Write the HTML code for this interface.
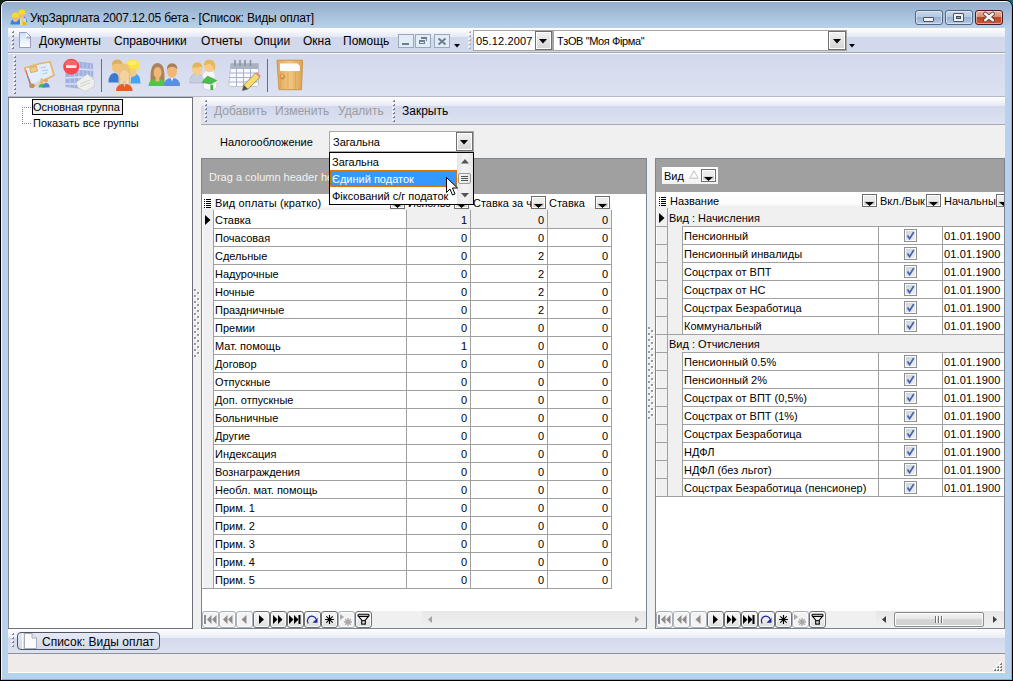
<!DOCTYPE html>
<html><head><meta charset="utf-8">
<style>
*{box-sizing:border-box;margin:0;padding:0}
html,body{width:1013px;height:681px;overflow:hidden}
body{position:relative;background:#0f2a1c;font-family:"Liberation Sans",sans-serif;font-size:11px;color:#000}
.a{position:absolute}
svg.a{overflow:visible}
.t{position:absolute;white-space:nowrap;line-height:1}
.r{text-align:right}
</style></head><body>
<div class="a" style="left:0px;top:0px;width:1013px;height:681px;background:#0f2a1c"></div>
<div class="a" style="left:990px;top:0px;width:23px;height:12px;background:#1b6a74"></div>
<div class="a" style="left:0px;top:0px;width:1013px;height:681px;background:#000;border-radius:7px 7px 0 0"></div>
<div class="a" style="left:1px;top:1px;width:1011px;height:679px;background:#b9d1ea;border-radius:6px 6px 0 0;border-top:1px solid #f6f9fc;border-left:1px solid #f4f8fc;border-right:1px solid #3fd4f4;border-bottom:1px solid #2cd2f0"></div>
<div class="a" style="left:2px;top:2px;width:1009px;height:26px;background:linear-gradient(#93adcb,#b9d1ea);border-radius:5px 5px 0 0"></div>
<svg class="a" style="left:11px;top:9px;" width="16" height="16" viewBox="0 0 16 16">
<path d="M8 13 q0-5.5 4-5.5 q4 0 4 5.5z" fill="#2e8ae6"/>
<ellipse cx="10.8" cy="6.8" rx="2.6" ry="3" fill="#f2b877"/>
<path d="M7.3 5.2 q0-4.6 3.7-4.6 q3.7 0 3.7 4.6z" fill="#f8dc20"/>
<path d="M-0.5 15.6 q0-5.8 4.8-5.8 q4.8 0 4.8 5.8z" fill="#2a86e2"/>
<ellipse cx="4.4" cy="10" rx="2.6" ry="3" fill="#f2b877"/>
<path d="M0.8 8.2 q0-4.6 3.7-4.6 q3.7 0 3.7 4.6z" fill="#f8dc20"/>
<rect x="9" y="9.2" width="6" height="6.8" fill="#ecdcaa"/>
<path d="M10 11 h4 M10 13 h3" stroke="#c8b070" stroke-width="0.6"/>
<rect x="11.5" y="13" width="3.8" height="3" fill="#f2b800"/>
</svg>
<div class="t" style="left:30px;top:12px;font-size:12px;color:#000;letter-spacing:-0.18px">УкрЗарплата 2007.12.05 бета - [Список: Виды оплат]</div>
<div class="a" style="left:915px;top:10px;width:28px;height:15px;background:linear-gradient(#c5d7ec 0,#b4c9e3 45%,#98b2d4 50%,#b3cae6 100%);border:1px solid #53657f;border-radius:3px;box-shadow:inset 0 0 0 1px rgba(255,255,255,0.45)"></div>
<div class="a" style="left:945px;top:10px;width:28px;height:15px;background:linear-gradient(#c5d7ec 0,#b4c9e3 45%,#98b2d4 50%,#b3cae6 100%);border:1px solid #53657f;border-radius:3px;box-shadow:inset 0 0 0 1px rgba(255,255,255,0.45)"></div>
<div class="a" style="left:975px;top:10px;width:28px;height:15px;background:linear-gradient(#eab0a2 0,#de8c78 45%,#c04424 50%,#c85a3a 100%);border:1px solid #4a1a1e;border-radius:3px;box-shadow:inset 0 0 0 1px rgba(255,255,255,0.45)"></div>
<div class="a" style="left:923px;top:17px;width:11px;height:5px;background:#f0f0f0;border:1px solid #4a5464;border-radius:1px"></div>
<div class="a" style="left:953px;top:13px;width:11px;height:9px;background:#f0f0f0;border:1px solid #4a5464;border-radius:1px"></div>
<div class="a" style="left:956px;top:16px;width:5px;height:3px;background:#8ea5c4;border:1px solid #3a4a5e"></div>
<svg class="a" style="left:983px;top:12px;" width="12" height="10" viewBox="0 0 12 10"><path d="M2.2 1.8 L9.8 8.2 M9.8 1.8 L2.2 8.2" stroke="#5a3a38" stroke-width="4.2" stroke-linecap="round"/><path d="M2.2 1.8 L9.8 8.2 M9.8 1.8 L2.2 8.2" stroke="#f2f2f2" stroke-width="2.6" stroke-linecap="round"/></svg>
<div class="a" style="left:8px;top:28px;width:997px;height:24px;background:linear-gradient(#ffffff 0,#e4e8f4 9px,#d3d9ed 9px,#d3d9ed 100%)"></div>
<div class="a" style="left:8px;top:52px;width:997px;height:1px;background:#a0a3ad"></div>
<div class="a" style="left:8px;top:53px;width:997px;height:1px;background:#fbfcfe"></div>
<div class="a" style="left:12px;top:31px;width:2px;height:2px;background:linear-gradient(135deg,#e8eaf0 0,#e8eaf0 40%,#7e828e 40%);box-shadow:-1px -1px 0 rgba(255,255,255,0.7)"></div>
<div class="a" style="left:12px;top:35px;width:2px;height:2px;background:linear-gradient(135deg,#e8eaf0 0,#e8eaf0 40%,#7e828e 40%);box-shadow:-1px -1px 0 rgba(255,255,255,0.7)"></div>
<div class="a" style="left:12px;top:39px;width:2px;height:2px;background:linear-gradient(135deg,#e8eaf0 0,#e8eaf0 40%,#7e828e 40%);box-shadow:-1px -1px 0 rgba(255,255,255,0.7)"></div>
<div class="a" style="left:12px;top:43px;width:2px;height:2px;background:linear-gradient(135deg,#e8eaf0 0,#e8eaf0 40%,#7e828e 40%);box-shadow:-1px -1px 0 rgba(255,255,255,0.7)"></div>
<div class="a" style="left:12px;top:47px;width:2px;height:2px;background:linear-gradient(135deg,#e8eaf0 0,#e8eaf0 40%,#7e828e 40%);box-shadow:-1px -1px 0 rgba(255,255,255,0.7)"></div>
<svg width="0" height="0" style="position:absolute"><defs><linearGradient id="dg" x1="0" y1="0" x2="0" y2="1"><stop offset="0" stop-color="#c8e0fa"/><stop offset="1" stop-color="#ffffff"/></linearGradient></defs></svg><svg class="a" style="left:19px;top:32px;" width="12" height="16" viewBox="0 0 12 16"><path d="M0.5 0.5 H7.5 L11.5 4.5 V15.5 H0.5Z" fill="url(#dg)" stroke="#9c9abf"/><path d="M7 1 L11 5 H7Z" fill="#fff"/><path d="M7.5 4.5 H11.5 V6.5 H7.5Z" fill="#8a9aa8" opacity="0.7"/></svg>
<div class="t" style="left:39px;top:35px;font-size:12px;color:#000;">Документы</div>
<div class="t" style="left:114px;top:35px;font-size:12px;color:#000;">Справочники</div>
<div class="t" style="left:201px;top:35px;font-size:12px;color:#000;">Отчеты</div>
<div class="t" style="left:254px;top:35px;font-size:12px;color:#000;">Опции</div>
<div class="t" style="left:303px;top:35px;font-size:12px;color:#000;">Окна</div>
<div class="t" style="left:343px;top:35px;font-size:12px;color:#000;">Помощь</div>
<div class="a" style="left:398px;top:34px;width:16px;height:14px;background:#e2ecf7;border:1px solid #9aa8bc"></div>
<div class="a" style="left:415px;top:34px;width:16px;height:14px;background:#e2ecf7;border:1px solid #9aa8bc"></div>
<div class="a" style="left:434px;top:34px;width:16px;height:14px;background:#e2ecf7;border:1px solid #9aa8bc"></div>
<div class="a" style="left:402px;top:43px;width:7px;height:2px;background:#6e7c8e"></div>
<div class="a" style="left:419px;top:40px;width:6px;height:4px;border:1px solid #6e7c8e;border-top-width:2px"></div>
<div class="a" style="left:421px;top:37px;width:6px;height:4px;border:1px solid #6e7c8e;border-top-width:2px;border-bottom:none;border-left:none"></div>
<svg class="a" style="left:437px;top:37px;" width="10" height="9" viewBox="0 0 10 9"><path d="M1.5 1.5 L8.5 7.5 M8.5 1.5 L1.5 7.5" stroke="#6e7c8e" stroke-width="2"/></svg>
<svg class="a" style="left:454px;top:44px;" width="6" height="4" viewBox="0 0 6 4"><path d="M0 0 H6 L3 3.5Z" fill="#000"/></svg>
<div class="a" style="left:469px;top:31px;width:2px;height:2px;background:linear-gradient(135deg,#e8eaf0 0,#e8eaf0 40%,#a8adba 40%);box-shadow:-1px -1px 0 rgba(255,255,255,0.7)"></div>
<div class="a" style="left:469px;top:35px;width:2px;height:2px;background:linear-gradient(135deg,#e8eaf0 0,#e8eaf0 40%,#a8adba 40%);box-shadow:-1px -1px 0 rgba(255,255,255,0.7)"></div>
<div class="a" style="left:469px;top:39px;width:2px;height:2px;background:linear-gradient(135deg,#e8eaf0 0,#e8eaf0 40%,#a8adba 40%);box-shadow:-1px -1px 0 rgba(255,255,255,0.7)"></div>
<div class="a" style="left:469px;top:43px;width:2px;height:2px;background:linear-gradient(135deg,#e8eaf0 0,#e8eaf0 40%,#a8adba 40%);box-shadow:-1px -1px 0 rgba(255,255,255,0.7)"></div>
<div class="a" style="left:469px;top:47px;width:2px;height:2px;background:linear-gradient(135deg,#e8eaf0 0,#e8eaf0 40%,#a8adba 40%);box-shadow:-1px -1px 0 rgba(255,255,255,0.7)"></div>
<div class="a" style="left:473px;top:30px;width:80px;height:21px;background:#fff;border:1px solid #a6a6a6"></div>
<div class="t" style="left:476px;top:36px;font-size:11px;color:#000;letter-spacing:0.15px">05.12.2007</div>
<div class="a" style="left:535px;top:31px;width:17px;height:19px;background:linear-gradient(#f2f2f2,#d4d4d4);border:1px solid #707070;box-shadow:inset 0 0 0 1px #fff"></div>
<svg class="a" style="left:539px;top:39px;" width="8" height="5" viewBox="0 0 8 5"><path d="M0 0 H8 L4 4.5Z" fill="#000"/></svg>
<div class="a" style="left:553px;top:30px;width:294px;height:21px;background:#fff;border:1px solid #a6a6a6"></div>
<div class="t" style="left:557px;top:36px;font-size:11px;color:#000;letter-spacing:-0.4px">ТзОВ "Моя Фірма"</div>
<div class="a" style="left:828px;top:31px;width:18px;height:19px;background:linear-gradient(#f2f2f2,#d4d4d4);border:1px solid #707070;box-shadow:inset 0 0 0 1px #fff"></div>
<svg class="a" style="left:833px;top:39px;" width="8" height="5" viewBox="0 0 8 5"><path d="M0 0 H8 L4 4.5Z" fill="#000"/></svg>
<svg class="a" style="left:849px;top:44px;" width="6" height="4" viewBox="0 0 6 4"><path d="M0 0 H6 L3 3.5Z" fill="#000"/></svg>
<div class="a" style="left:8px;top:54px;width:997px;height:42px;background:linear-gradient(#d3d9ed,#dde2f1)"></div>
<div class="a" style="left:8px;top:96px;width:997px;height:1px;background:#b5b9c8"></div>
<div class="a" style="left:14px;top:56px;width:2px;height:2px;background:linear-gradient(135deg,#e8eaf0 0,#e8eaf0 40%,#7e828e 40%);box-shadow:-1px -1px 0 rgba(255,255,255,0.7)"></div>
<div class="a" style="left:14px;top:60px;width:2px;height:2px;background:linear-gradient(135deg,#e8eaf0 0,#e8eaf0 40%,#7e828e 40%);box-shadow:-1px -1px 0 rgba(255,255,255,0.7)"></div>
<div class="a" style="left:14px;top:64px;width:2px;height:2px;background:linear-gradient(135deg,#e8eaf0 0,#e8eaf0 40%,#7e828e 40%);box-shadow:-1px -1px 0 rgba(255,255,255,0.7)"></div>
<div class="a" style="left:14px;top:68px;width:2px;height:2px;background:linear-gradient(135deg,#e8eaf0 0,#e8eaf0 40%,#7e828e 40%);box-shadow:-1px -1px 0 rgba(255,255,255,0.7)"></div>
<div class="a" style="left:14px;top:72px;width:2px;height:2px;background:linear-gradient(135deg,#e8eaf0 0,#e8eaf0 40%,#7e828e 40%);box-shadow:-1px -1px 0 rgba(255,255,255,0.7)"></div>
<div class="a" style="left:14px;top:76px;width:2px;height:2px;background:linear-gradient(135deg,#e8eaf0 0,#e8eaf0 40%,#7e828e 40%);box-shadow:-1px -1px 0 rgba(255,255,255,0.7)"></div>
<div class="a" style="left:14px;top:80px;width:2px;height:2px;background:linear-gradient(135deg,#e8eaf0 0,#e8eaf0 40%,#7e828e 40%);box-shadow:-1px -1px 0 rgba(255,255,255,0.7)"></div>
<div class="a" style="left:14px;top:84px;width:2px;height:2px;background:linear-gradient(135deg,#e8eaf0 0,#e8eaf0 40%,#7e828e 40%);box-shadow:-1px -1px 0 rgba(255,255,255,0.7)"></div>
<div class="a" style="left:14px;top:88px;width:2px;height:2px;background:linear-gradient(135deg,#e8eaf0 0,#e8eaf0 40%,#7e828e 40%);box-shadow:-1px -1px 0 rgba(255,255,255,0.7)"></div>
<div class="a" style="left:14px;top:92px;width:2px;height:2px;background:linear-gradient(135deg,#e8eaf0 0,#e8eaf0 40%,#7e828e 40%);box-shadow:-1px -1px 0 rgba(255,255,255,0.7)"></div>
<div class="a" style="left:101px;top:59px;width:1px;height:33px;background:#6a6f7a"></div>
<div class="a" style="left:267px;top:59px;width:1px;height:33px;background:#6a6f7a"></div>
<svg class="a" style="left:24px;top:60px;" width="32" height="30" viewBox="0 0 32 30">
<path d="M0.5 8 L15.5 3.8 L26 1.8 L30 15.3 L18 21.3 L8 27 Z" fill="#e2eefb" stroke="#e8b25e" stroke-width="1.6" stroke-linejoin="round"/>
<path d="M15.5 3.8 L18 21.3" stroke="#d8e4f4" stroke-width="0.8"/>
<path d="M1.8 10 L6 24" stroke="#e06060" stroke-width="1"/><path d="M4 17 L6.5 24" stroke="#5a90e0" stroke-width="1"/>
<rect x="6" y="7" width="7" height="5" fill="#f0cc88" stroke="#d8a458" stroke-width="0.8" transform="rotate(-12 9 9)"/>
<path d="M17 8 q2-1 5 -1 M18 11 q2-1 6-1 M18.5 14 q2-1 5-1" stroke="#98b4e4" stroke-width="0.8" fill="none"/>
<path d="M9 24 L15 20.5 L17 22 L11 26z" fill="#d8dce0"/>
<ellipse cx="8" cy="25.8" rx="2.8" ry="2.3" fill="#c88e58"/>
<rect x="16.5" y="18.5" width="2.6" height="5.5" fill="#e8b670"/>
<path d="M14.5 27.5 q0-3.5 3.3-3.5 q3.3 0 3.3 3.5z" fill="#40c040"/>
<circle cx="22" cy="20.5" r="2" fill="#eaa860"/>
<path d="M18.5 27.5 q0-4.5 3.6-4.5 q3.6 0 3.6 4.5z" fill="#4a84d8"/>
</svg>
<svg class="a" style="left:63px;top:60px;" width="32" height="32" viewBox="0 0 32 32">
<path d="M2.5 7 L16 1.5 L30 3.5 L30.5 27 L16 28.5 L2.5 27 Z" fill="#9fb0e2"/>
<path d="M16 1.5 V28.5" stroke="#c8d2f0" stroke-width="1"/>
<path d="M2.5 11 L16 9 L30 10 M2.5 18 L16 17 L30 17.5 M2.5 24 L16 24 L30 24" stroke="#dde4f6" stroke-width="1.3" fill="none"/>
<path d="M7 8 V27 M11.5 7 V27 M20 3 V28 M24 3.5 V28 M27.5 4 V28" stroke="#c4cef0" stroke-width="0.9"/>
<path d="M13 22.5 L24.5 14 L31.5 20.5 L31 26.5 L22 31.5 L15 27.5Z" fill="#eef0ee" stroke="#c6cac8" stroke-width="0.7"/>
<path d="M17 24 L27 20 M17.5 26.5 L27.5 22.5" stroke="#b8bcba" stroke-width="0.6"/>
<circle cx="8.2" cy="6.7" r="8" fill="#f24a4e"/>
<ellipse cx="8.2" cy="4" rx="6" ry="4" fill="#ff8a8a" opacity="0.45"/>
<rect x="3" y="5.2" width="10.4" height="2.8" fill="#fbe8e8"/>
</svg>
<svg class="a" style="left:108px;top:59px;" width="34" height="33" viewBox="0 0 34 33">
<path d="M0.5 23.5 q0-9 6-9.5 q5 0 5 9.5z" fill="#3a7ad4"/>
<ellipse cx="9" cy="7.5" rx="5.2" ry="6.5" fill="#f2c47a"/>
<path d="M3.8 6 q0.5-5.5 5.5-5.5 q5 0 5.5 5.5 q-5-3-11 0z" fill="#dcb060"/>
<path d="M22.5 24.5 q0-9.5 4.5-9.5 q5.5 0 5.5 9.5z" fill="#46a4f4"/>
<ellipse cx="24.5" cy="13" rx="4.2" ry="4.8" fill="#f4cc84"/>
<path d="M17 9.8 q0-9.3 7.6-9.3 q7.6 0 7.6 9.3z" fill="#fce63a"/>
<ellipse cx="24.5" cy="4" rx="4" ry="2" fill="#fff890" opacity="0.6"/>
<path d="M8 32 q0-7 8.3-7.5 q8.3 0.5 8.3 7.5z" fill="#e2602c"/>
<path d="M10.5 15 q0-10.5 6-10.5 q6 0 6 10.5 v11 l-2 0 v-6 h-8 v6 l-2 0z" fill="#e8c47c"/>
<ellipse cx="16.5" cy="17" rx="4.6" ry="5.6" fill="#f8d29c"/>
<path d="M14.5 22 L16.5 28.5 L18.5 22z" fill="#f2c880"/>
</svg>
<svg class="a" style="left:148px;top:62px;" width="32" height="29" viewBox="0 0 32 29">
<path d="M2.5 15 q0-14 7-14 q7 0 7 14 v7 h-14z" fill="#a8845e"/>
<path d="M0.5 24 q0-7 8.5-7.5 q8.5 0.5 8.5 7.5z" fill="#52c44c"/>
<ellipse cx="9.6" cy="10.5" rx="3.9" ry="5.6" fill="#f4b674"/>
<rect x="7.8" y="15" width="3.6" height="4.5" fill="#f4b674"/>
<path d="M16 24 q0-8 8-8 q8 0 8 8z" fill="#5a8ee2"/>
<path d="M22.5 16 l1.5 3.5 l1.5-3.5z" fill="#e8f0fa"/>
<ellipse cx="24" cy="9.5" rx="5" ry="6.2" fill="#f4b674"/>
<path d="M18.8 8 q0-6.8 5.4-6.8 q5.2 0 5.2 6.8 q-1-3-5.5-3.3 q-3 0-5.1 3.3z" fill="#a88058"/>
</svg>
<svg class="a" style="left:189px;top:59px;" width="30" height="33" viewBox="0 0 30 33">
<path d="M0.8 24 q0-9.5 7-9.8 q7 0.3 7 9.8z" fill="#c4d0de" stroke="#aab4c2" stroke-width="0.6"/>
<ellipse cx="8.2" cy="10.3" rx="5" ry="6" fill="#f6cc88"/>
<path d="M3.2 9.5 q0-6 5-6.2 q5 0.2 5 5 q-3-1.5-5 1 q-2-2-5 0.2z" fill="#e4b45c"/>
<path d="M13.4 19 q0-7.5 6.6-8 q6.6 0.5 6.6 8z" fill="#f6f8fa" stroke="#d0d6de" stroke-width="0.6"/>
<ellipse cx="20.3" cy="7" rx="5.3" ry="6.2" fill="#f6cc88"/>
<path d="M14.8 6.5 q0-6 5.5-6 q5.5 0 6 6.5 q0 3-1 5 q-1-6-5-7 q-3 0-5.5 1.5z" fill="#e6b860"/>
<path d="M14.5 23.5 L22.5 25.5 L27.7 22.5 V29 L22.5 31.5 L14.5 29.5Z" fill="#f8f8f8" stroke="#c8c8c8" stroke-width="0.6"/>
<path d="M13 23.5 L18.5 17 L28 21.8 L22.5 25 Z" fill="#4cbc4c" stroke="#2e9a2e" stroke-width="0.5"/>
<path d="M22.5 25 L28 21.8 L28 23.5 L22.5 26.2z" fill="#e8e8e8"/>
<rect x="21.5" y="26" width="2.6" height="5" fill="#40b440"/>
</svg>
<svg class="a" style="left:228px;top:59px;" width="33" height="33" viewBox="0 0 33 33">
<path d="M3 4.5 H30.5 V26 L29 27.5 H2 L0.8 26Z" fill="#f8fafc" stroke="#b8bcc8" stroke-width="0.8"/>
<rect x="2.5" y="4.5" width="28" height="5.5" fill="#a8b2c2"/>
<path d="M1.5 14 H30.5 M1.2 18.5 H30.5 M1 23 H30.5 M8.5 10 V27.5 M15.5 10 V27.5 M22.5 10 V27.5" stroke="#a4a8c8" stroke-width="0.9"/>
<path d="M7 1 v6 M12 1 v6 M17 1 v6 M22.5 1 v6" stroke="#8a909c" stroke-width="1.6"/>
<path d="M14.5 31.5 L15.8 26 L27.5 14 L31.8 18.5 L20 30Z" fill="#f6dc6e" stroke="#7c7048" stroke-width="0.7"/>
<path d="M27.5 14 L31.8 18.5 L32.5 16.5 L29.5 13.3z" fill="#e88a9a"/>
<path d="M14.5 31.5 L15.8 26 L20 30Z" fill="#505050"/>
</svg>
<svg class="a" style="left:276px;top:59px;" width="28" height="33" viewBox="0 0 28 33">
<defs><linearGradient id="doorg" x1="0" y1="0" x2="1" y2="0"><stop offset="0" stop-color="#e2a85a"/><stop offset="0.5" stop-color="#f2c67e"/><stop offset="1" stop-color="#dca458"/></linearGradient></defs>
<path d="M1 1.2 H26.5 L25.5 30.7 H3 Z" fill="url(#doorg)" stroke="#c88c44" stroke-width="0.9"/>
<path d="M4.5 13 V29.5 M12 13 V29.5 M19.5 13 V29.5" stroke="#dca25a" stroke-width="0.8"/>
<path d="M4 4.5 H21.5 L23.8 6.8 V12 H4z" fill="#fbfdff"/>
<circle cx="6.3" cy="17.8" r="2.4" fill="#d09850" stroke="#c08040" stroke-width="0.5"/>
<circle cx="6" cy="17" r="1" fill="#f4d8a8"/>
</svg>
<div class="a" style="left:8px;top:97px;width:185px;height:532px;background:#fff;border:1px solid #6e7079;border-left-color:#828790"></div>
<div class="a" style="left:32px;top:99px;width:91px;height:16px;background:#f0f0f0;border:1px solid #000"></div>
<div class="t" style="left:33px;top:102px;font-size:11px;color:#000;">Основная группа</div>
<div class="t" style="left:33px;top:118px;font-size:11px;color:#000;">Показать все группы</div>
<div class="a" style="left:22px;top:107px;width:9px;height:1px;background-image:linear-gradient(90deg,#808080 50%,transparent 50%);background-size:2px 1px"></div>
<div class="a" style="left:22px;top:107px;width:1px;height:17px;background-image:linear-gradient(#808080 50%,transparent 50%);background-size:1px 2px"></div>
<div class="a" style="left:22px;top:123px;width:9px;height:1px;background-image:linear-gradient(90deg,#808080 50%,transparent 50%);background-size:2px 1px"></div>
<div class="a" style="left:193px;top:97px;width:812px;height:532px;background:#f0f0f0"></div>
<div class="a" style="left:194px;top:289px;width:2px;height:2px;background:#9a9a9a;box-shadow:1px 1px 0 #fff"></div>
<div class="a" style="left:197px;top:292px;width:2px;height:2px;background:#9a9a9a;box-shadow:1px 1px 0 #fff"></div>
<div class="a" style="left:194px;top:295px;width:2px;height:2px;background:#9a9a9a;box-shadow:1px 1px 0 #fff"></div>
<div class="a" style="left:197px;top:298px;width:2px;height:2px;background:#9a9a9a;box-shadow:1px 1px 0 #fff"></div>
<div class="a" style="left:194px;top:301px;width:2px;height:2px;background:#9a9a9a;box-shadow:1px 1px 0 #fff"></div>
<div class="a" style="left:197px;top:304px;width:2px;height:2px;background:#9a9a9a;box-shadow:1px 1px 0 #fff"></div>
<div class="a" style="left:194px;top:307px;width:2px;height:2px;background:#9a9a9a;box-shadow:1px 1px 0 #fff"></div>
<div class="a" style="left:197px;top:310px;width:2px;height:2px;background:#9a9a9a;box-shadow:1px 1px 0 #fff"></div>
<div class="a" style="left:194px;top:313px;width:2px;height:2px;background:#9a9a9a;box-shadow:1px 1px 0 #fff"></div>
<div class="a" style="left:197px;top:316px;width:2px;height:2px;background:#9a9a9a;box-shadow:1px 1px 0 #fff"></div>
<div class="a" style="left:194px;top:319px;width:2px;height:2px;background:#9a9a9a;box-shadow:1px 1px 0 #fff"></div>
<div class="a" style="left:197px;top:322px;width:2px;height:2px;background:#9a9a9a;box-shadow:1px 1px 0 #fff"></div>
<div class="a" style="left:194px;top:325px;width:2px;height:2px;background:#9a9a9a;box-shadow:1px 1px 0 #fff"></div>
<div class="a" style="left:197px;top:328px;width:2px;height:2px;background:#9a9a9a;box-shadow:1px 1px 0 #fff"></div>
<div class="a" style="left:194px;top:331px;width:2px;height:2px;background:#9a9a9a;box-shadow:1px 1px 0 #fff"></div>
<div class="a" style="left:197px;top:334px;width:2px;height:2px;background:#9a9a9a;box-shadow:1px 1px 0 #fff"></div>
<div class="a" style="left:194px;top:337px;width:2px;height:2px;background:#9a9a9a;box-shadow:1px 1px 0 #fff"></div>
<div class="a" style="left:197px;top:340px;width:2px;height:2px;background:#9a9a9a;box-shadow:1px 1px 0 #fff"></div>
<div class="a" style="left:194px;top:343px;width:2px;height:2px;background:#9a9a9a;box-shadow:1px 1px 0 #fff"></div>
<div class="a" style="left:197px;top:346px;width:2px;height:2px;background:#9a9a9a;box-shadow:1px 1px 0 #fff"></div>
<div class="a" style="left:194px;top:349px;width:2px;height:2px;background:#9a9a9a;box-shadow:1px 1px 0 #fff"></div>
<div class="a" style="left:197px;top:352px;width:2px;height:2px;background:#9a9a9a;box-shadow:1px 1px 0 #fff"></div>
<div class="a" style="left:194px;top:355px;width:2px;height:2px;background:#9a9a9a;box-shadow:1px 1px 0 #fff"></div>
<div class="a" style="left:648px;top:327px;width:2px;height:2px;background:#9a9a9a;box-shadow:1px 1px 0 #fff"></div>
<div class="a" style="left:651px;top:330px;width:2px;height:2px;background:#9a9a9a;box-shadow:1px 1px 0 #fff"></div>
<div class="a" style="left:648px;top:333px;width:2px;height:2px;background:#9a9a9a;box-shadow:1px 1px 0 #fff"></div>
<div class="a" style="left:651px;top:336px;width:2px;height:2px;background:#9a9a9a;box-shadow:1px 1px 0 #fff"></div>
<div class="a" style="left:648px;top:339px;width:2px;height:2px;background:#9a9a9a;box-shadow:1px 1px 0 #fff"></div>
<div class="a" style="left:651px;top:342px;width:2px;height:2px;background:#9a9a9a;box-shadow:1px 1px 0 #fff"></div>
<div class="a" style="left:648px;top:345px;width:2px;height:2px;background:#9a9a9a;box-shadow:1px 1px 0 #fff"></div>
<div class="a" style="left:651px;top:348px;width:2px;height:2px;background:#9a9a9a;box-shadow:1px 1px 0 #fff"></div>
<div class="a" style="left:648px;top:351px;width:2px;height:2px;background:#9a9a9a;box-shadow:1px 1px 0 #fff"></div>
<div class="a" style="left:651px;top:354px;width:2px;height:2px;background:#9a9a9a;box-shadow:1px 1px 0 #fff"></div>
<div class="a" style="left:648px;top:357px;width:2px;height:2px;background:#9a9a9a;box-shadow:1px 1px 0 #fff"></div>
<div class="a" style="left:651px;top:360px;width:2px;height:2px;background:#9a9a9a;box-shadow:1px 1px 0 #fff"></div>
<div class="a" style="left:648px;top:363px;width:2px;height:2px;background:#9a9a9a;box-shadow:1px 1px 0 #fff"></div>
<div class="a" style="left:651px;top:366px;width:2px;height:2px;background:#9a9a9a;box-shadow:1px 1px 0 #fff"></div>
<div class="a" style="left:648px;top:369px;width:2px;height:2px;background:#9a9a9a;box-shadow:1px 1px 0 #fff"></div>
<div class="a" style="left:651px;top:372px;width:2px;height:2px;background:#9a9a9a;box-shadow:1px 1px 0 #fff"></div>
<div class="a" style="left:648px;top:375px;width:2px;height:2px;background:#9a9a9a;box-shadow:1px 1px 0 #fff"></div>
<div class="a" style="left:651px;top:378px;width:2px;height:2px;background:#9a9a9a;box-shadow:1px 1px 0 #fff"></div>
<div class="a" style="left:648px;top:381px;width:2px;height:2px;background:#9a9a9a;box-shadow:1px 1px 0 #fff"></div>
<div class="a" style="left:651px;top:384px;width:2px;height:2px;background:#9a9a9a;box-shadow:1px 1px 0 #fff"></div>
<div class="a" style="left:648px;top:387px;width:2px;height:2px;background:#9a9a9a;box-shadow:1px 1px 0 #fff"></div>
<div class="a" style="left:651px;top:390px;width:2px;height:2px;background:#9a9a9a;box-shadow:1px 1px 0 #fff"></div>
<div class="a" style="left:648px;top:393px;width:2px;height:2px;background:#9a9a9a;box-shadow:1px 1px 0 #fff"></div>
<div class="a" style="left:651px;top:396px;width:2px;height:2px;background:#9a9a9a;box-shadow:1px 1px 0 #fff"></div>
<div class="a" style="left:648px;top:399px;width:2px;height:2px;background:#9a9a9a;box-shadow:1px 1px 0 #fff"></div>
<div class="a" style="left:651px;top:402px;width:2px;height:2px;background:#9a9a9a;box-shadow:1px 1px 0 #fff"></div>
<div class="a" style="left:648px;top:405px;width:2px;height:2px;background:#9a9a9a;box-shadow:1px 1px 0 #fff"></div>
<div class="a" style="left:651px;top:408px;width:2px;height:2px;background:#9a9a9a;box-shadow:1px 1px 0 #fff"></div>
<div class="a" style="left:648px;top:411px;width:2px;height:2px;background:#9a9a9a;box-shadow:1px 1px 0 #fff"></div>
<div class="a" style="left:651px;top:414px;width:2px;height:2px;background:#9a9a9a;box-shadow:1px 1px 0 #fff"></div>
<div class="a" style="left:648px;top:417px;width:2px;height:2px;background:#9a9a9a;box-shadow:1px 1px 0 #fff"></div>
<div class="a" style="left:201px;top:97px;width:804px;height:27px;background:linear-gradient(#ffffff 0,#e6e9f5 9px,#d3d9ed 9px,#dde2f1 100%)"></div>
<div class="a" style="left:201px;top:124px;width:804px;height:1px;background:#a5a9b4"></div>
<div class="a" style="left:205px;top:100px;width:2px;height:2px;background:linear-gradient(135deg,#e8eaf0 0,#e8eaf0 40%,#7e828e 40%);box-shadow:-1px -1px 0 rgba(255,255,255,0.7)"></div>
<div class="a" style="left:205px;top:104px;width:2px;height:2px;background:linear-gradient(135deg,#e8eaf0 0,#e8eaf0 40%,#7e828e 40%);box-shadow:-1px -1px 0 rgba(255,255,255,0.7)"></div>
<div class="a" style="left:205px;top:108px;width:2px;height:2px;background:linear-gradient(135deg,#e8eaf0 0,#e8eaf0 40%,#7e828e 40%);box-shadow:-1px -1px 0 rgba(255,255,255,0.7)"></div>
<div class="a" style="left:205px;top:112px;width:2px;height:2px;background:linear-gradient(135deg,#e8eaf0 0,#e8eaf0 40%,#7e828e 40%);box-shadow:-1px -1px 0 rgba(255,255,255,0.7)"></div>
<div class="a" style="left:205px;top:116px;width:2px;height:2px;background:linear-gradient(135deg,#e8eaf0 0,#e8eaf0 40%,#7e828e 40%);box-shadow:-1px -1px 0 rgba(255,255,255,0.7)"></div>
<div class="a" style="left:205px;top:120px;width:2px;height:2px;background:linear-gradient(135deg,#e8eaf0 0,#e8eaf0 40%,#7e828e 40%);box-shadow:-1px -1px 0 rgba(255,255,255,0.7)"></div>
<div class="a" style="left:393px;top:100px;width:2px;height:2px;background:linear-gradient(135deg,#e8eaf0 0,#e8eaf0 40%,#7e828e 40%);box-shadow:-1px -1px 0 rgba(255,255,255,0.7)"></div>
<div class="a" style="left:393px;top:104px;width:2px;height:2px;background:linear-gradient(135deg,#e8eaf0 0,#e8eaf0 40%,#7e828e 40%);box-shadow:-1px -1px 0 rgba(255,255,255,0.7)"></div>
<div class="a" style="left:393px;top:108px;width:2px;height:2px;background:linear-gradient(135deg,#e8eaf0 0,#e8eaf0 40%,#7e828e 40%);box-shadow:-1px -1px 0 rgba(255,255,255,0.7)"></div>
<div class="a" style="left:393px;top:112px;width:2px;height:2px;background:linear-gradient(135deg,#e8eaf0 0,#e8eaf0 40%,#7e828e 40%);box-shadow:-1px -1px 0 rgba(255,255,255,0.7)"></div>
<div class="a" style="left:393px;top:116px;width:2px;height:2px;background:linear-gradient(135deg,#e8eaf0 0,#e8eaf0 40%,#7e828e 40%);box-shadow:-1px -1px 0 rgba(255,255,255,0.7)"></div>
<div class="a" style="left:393px;top:120px;width:2px;height:2px;background:linear-gradient(135deg,#e8eaf0 0,#e8eaf0 40%,#7e828e 40%);box-shadow:-1px -1px 0 rgba(255,255,255,0.7)"></div>
<div class="t" style="left:214px;top:105px;font-size:12px;color:#9c9c9c;">Добавить</div>
<div class="t" style="left:275px;top:105px;font-size:12px;color:#9c9c9c;">Изменить</div>
<div class="t" style="left:338px;top:105px;font-size:12px;color:#9c9c9c;">Удалить</div>
<div class="t" style="left:402px;top:105px;font-size:12px;color:#000;">Закрыть</div>
<div class="t" style="left:220px;top:137px;font-size:11px;color:#000;">Налогообложение</div>
<div class="a" style="left:329px;top:131px;width:145px;height:21px;background:#fff;border:1px solid #a9a9a9"></div>
<div class="t" style="left:333px;top:137px;font-size:11px;color:#000;">Загальна</div>
<div class="a" style="left:456px;top:132px;width:17px;height:19px;background:linear-gradient(#f2f2f2,#d4d4d4);border:1px solid #707070;box-shadow:inset 0 0 0 1px #fff"></div>
<svg class="a" style="left:460px;top:140px;" width="8" height="5" viewBox="0 0 8 5"><path d="M0 0 H8 L4 4.5Z" fill="#000"/></svg>
<div class="a" style="left:201px;top:158px;width:446px;height:471px;background:#fff;border:1px solid #7b8391"></div>
<div class="a" style="left:202px;top:159px;width:444px;height:35px;background:#a0a0a0"></div>
<div class="t" style="left:209px;top:172px;font-size:11px;color:#f2f2f2;">Drag a column header here to group by that column</div>
<div class="a" style="left:202px;top:194px;width:410px;height:16px;background:linear-gradient(#ffffff 0,#fdfdfd 70%,#ededed 100%)"></div>
<div class="a" style="left:204px;top:199px;width:1px;height:1px;background:#000"></div>
<div class="a" style="left:206px;top:199px;width:5px;height:1px;background:#000"></div>
<div class="a" style="left:204px;top:201px;width:1px;height:1px;background:#000"></div>
<div class="a" style="left:206px;top:201px;width:5px;height:1px;background:#000"></div>
<div class="a" style="left:204px;top:203px;width:1px;height:1px;background:#000"></div>
<div class="a" style="left:206px;top:203px;width:5px;height:1px;background:#000"></div>
<div class="a" style="left:204px;top:205px;width:1px;height:1px;background:#000"></div>
<div class="a" style="left:206px;top:205px;width:5px;height:1px;background:#000"></div>
<div class="a" style="left:204px;top:207px;width:1px;height:1px;background:#000"></div>
<div class="a" style="left:206px;top:207px;width:5px;height:1px;background:#000"></div>
<div class="t" style="left:215px;top:198px;font-size:11px;color:#000;letter-spacing:0.15px">Вид оплаты (кратко)</div>
<div class="a" style="left:390px;top:196px;width:15px;height:13px;background:linear-gradient(#eeeeee 0,#ebebeb 50%,#d8d8d8 50%,#d6d6d6 100%);border:1px solid #6d6d6d;box-shadow:inset 0 0 0 1px #fff"></div>
<svg class="a" style="left:393px;top:204px;" width="9" height="4" viewBox="0 0 9 4"><path d="M0 0 H9 L4.5 4Z" fill="#000"/></svg>
<div class="t" style="left:408px;top:198px;font-size:11px;color:#000;">Использ</div>
<div class="a" style="left:454px;top:196px;width:15px;height:13px;background:linear-gradient(#eeeeee 0,#ebebeb 50%,#d8d8d8 50%,#d6d6d6 100%);border:1px solid #6d6d6d;box-shadow:inset 0 0 0 1px #fff"></div>
<svg class="a" style="left:457px;top:204px;" width="9" height="4" viewBox="0 0 9 4"><path d="M0 0 H9 L4.5 4Z" fill="#000"/></svg>
<div class="t" style="left:473px;top:198px;font-size:11px;color:#000;">Ставка за ч</div>
<div class="a" style="left:531px;top:196px;width:15px;height:13px;background:linear-gradient(#eeeeee 0,#ebebeb 50%,#d8d8d8 50%,#d6d6d6 100%);border:1px solid #6d6d6d;box-shadow:inset 0 0 0 1px #fff"></div>
<svg class="a" style="left:534px;top:204px;" width="9" height="4" viewBox="0 0 9 4"><path d="M0 0 H9 L4.5 4Z" fill="#000"/></svg>
<div class="t" style="left:549px;top:198px;font-size:11px;color:#000;">Ставка</div>
<div class="a" style="left:595px;top:196px;width:15px;height:13px;background:linear-gradient(#eeeeee 0,#ebebeb 50%,#d8d8d8 50%,#d6d6d6 100%);border:1px solid #6d6d6d;box-shadow:inset 0 0 0 1px #fff"></div>
<svg class="a" style="left:598px;top:204px;" width="9" height="4" viewBox="0 0 9 4"><path d="M0 0 H9 L4.5 4Z" fill="#000"/></svg>
<div class="a" style="left:407px;top:210px;width:204px;height:18px;background:#f0f0f0"></div>
<div class="a" style="left:202px;top:210px;width:11px;height:18px;background:#f0f0f0;border-left:1px solid #fff"></div>
<div class="a" style="left:202px;top:228px;width:410px;height:1px;background:#a0a0a0"></div>
<svg class="a" style="left:205px;top:215px;" width="6" height="10" viewBox="0 0 6 10"><path d="M0 0 L5.5 5 L0 10Z" fill="#000"/></svg>
<div class="t" style="left:215px;top:215px;font-size:11px;color:#000;">Ставка</div>
<div class="t" style="left:406px;top:215px;font-size:11px;color:#000;width:61px;text-align:right">1</div>
<div class="t" style="left:470px;top:215px;font-size:11px;color:#000;width:74px;text-align:right">0</div>
<div class="t" style="left:547px;top:215px;font-size:11px;color:#000;width:61px;text-align:right">0</div>
<div class="a" style="left:202px;top:228px;width:11px;height:18px;background:#f0f0f0;border-left:1px solid #fff"></div>
<div class="a" style="left:202px;top:246px;width:410px;height:1px;background:#a0a0a0"></div>
<div class="t" style="left:215px;top:233px;font-size:11px;color:#000;">Почасовая</div>
<div class="t" style="left:406px;top:233px;font-size:11px;color:#000;width:61px;text-align:right">0</div>
<div class="t" style="left:470px;top:233px;font-size:11px;color:#000;width:74px;text-align:right">0</div>
<div class="t" style="left:547px;top:233px;font-size:11px;color:#000;width:61px;text-align:right">0</div>
<div class="a" style="left:202px;top:246px;width:11px;height:18px;background:#f0f0f0;border-left:1px solid #fff"></div>
<div class="a" style="left:202px;top:264px;width:410px;height:1px;background:#a0a0a0"></div>
<div class="t" style="left:215px;top:251px;font-size:11px;color:#000;">Сдельные</div>
<div class="t" style="left:406px;top:251px;font-size:11px;color:#000;width:61px;text-align:right">0</div>
<div class="t" style="left:470px;top:251px;font-size:11px;color:#000;width:74px;text-align:right">2</div>
<div class="t" style="left:547px;top:251px;font-size:11px;color:#000;width:61px;text-align:right">0</div>
<div class="a" style="left:202px;top:264px;width:11px;height:18px;background:#f0f0f0;border-left:1px solid #fff"></div>
<div class="a" style="left:202px;top:282px;width:410px;height:1px;background:#a0a0a0"></div>
<div class="t" style="left:215px;top:269px;font-size:11px;color:#000;">Надурочные</div>
<div class="t" style="left:406px;top:269px;font-size:11px;color:#000;width:61px;text-align:right">0</div>
<div class="t" style="left:470px;top:269px;font-size:11px;color:#000;width:74px;text-align:right">2</div>
<div class="t" style="left:547px;top:269px;font-size:11px;color:#000;width:61px;text-align:right">0</div>
<div class="a" style="left:202px;top:282px;width:11px;height:18px;background:#f0f0f0;border-left:1px solid #fff"></div>
<div class="a" style="left:202px;top:300px;width:410px;height:1px;background:#a0a0a0"></div>
<div class="t" style="left:215px;top:287px;font-size:11px;color:#000;">Ночные</div>
<div class="t" style="left:406px;top:287px;font-size:11px;color:#000;width:61px;text-align:right">0</div>
<div class="t" style="left:470px;top:287px;font-size:11px;color:#000;width:74px;text-align:right">2</div>
<div class="t" style="left:547px;top:287px;font-size:11px;color:#000;width:61px;text-align:right">0</div>
<div class="a" style="left:202px;top:300px;width:11px;height:18px;background:#f0f0f0;border-left:1px solid #fff"></div>
<div class="a" style="left:202px;top:318px;width:410px;height:1px;background:#a0a0a0"></div>
<div class="t" style="left:215px;top:305px;font-size:11px;color:#000;">Праздничные</div>
<div class="t" style="left:406px;top:305px;font-size:11px;color:#000;width:61px;text-align:right">0</div>
<div class="t" style="left:470px;top:305px;font-size:11px;color:#000;width:74px;text-align:right">2</div>
<div class="t" style="left:547px;top:305px;font-size:11px;color:#000;width:61px;text-align:right">0</div>
<div class="a" style="left:202px;top:318px;width:11px;height:18px;background:#f0f0f0;border-left:1px solid #fff"></div>
<div class="a" style="left:202px;top:336px;width:410px;height:1px;background:#a0a0a0"></div>
<div class="t" style="left:215px;top:323px;font-size:11px;color:#000;">Премии</div>
<div class="t" style="left:406px;top:323px;font-size:11px;color:#000;width:61px;text-align:right">0</div>
<div class="t" style="left:470px;top:323px;font-size:11px;color:#000;width:74px;text-align:right">0</div>
<div class="t" style="left:547px;top:323px;font-size:11px;color:#000;width:61px;text-align:right">0</div>
<div class="a" style="left:202px;top:336px;width:11px;height:18px;background:#f0f0f0;border-left:1px solid #fff"></div>
<div class="a" style="left:202px;top:354px;width:410px;height:1px;background:#a0a0a0"></div>
<div class="t" style="left:215px;top:341px;font-size:11px;color:#000;">Мат. помощь</div>
<div class="t" style="left:406px;top:341px;font-size:11px;color:#000;width:61px;text-align:right">1</div>
<div class="t" style="left:470px;top:341px;font-size:11px;color:#000;width:74px;text-align:right">0</div>
<div class="t" style="left:547px;top:341px;font-size:11px;color:#000;width:61px;text-align:right">0</div>
<div class="a" style="left:202px;top:354px;width:11px;height:18px;background:#f0f0f0;border-left:1px solid #fff"></div>
<div class="a" style="left:202px;top:372px;width:410px;height:1px;background:#a0a0a0"></div>
<div class="t" style="left:215px;top:359px;font-size:11px;color:#000;">Договор</div>
<div class="t" style="left:406px;top:359px;font-size:11px;color:#000;width:61px;text-align:right">0</div>
<div class="t" style="left:470px;top:359px;font-size:11px;color:#000;width:74px;text-align:right">0</div>
<div class="t" style="left:547px;top:359px;font-size:11px;color:#000;width:61px;text-align:right">0</div>
<div class="a" style="left:202px;top:372px;width:11px;height:18px;background:#f0f0f0;border-left:1px solid #fff"></div>
<div class="a" style="left:202px;top:390px;width:410px;height:1px;background:#a0a0a0"></div>
<div class="t" style="left:215px;top:377px;font-size:11px;color:#000;">Отпускные</div>
<div class="t" style="left:406px;top:377px;font-size:11px;color:#000;width:61px;text-align:right">0</div>
<div class="t" style="left:470px;top:377px;font-size:11px;color:#000;width:74px;text-align:right">0</div>
<div class="t" style="left:547px;top:377px;font-size:11px;color:#000;width:61px;text-align:right">0</div>
<div class="a" style="left:202px;top:390px;width:11px;height:18px;background:#f0f0f0;border-left:1px solid #fff"></div>
<div class="a" style="left:202px;top:408px;width:410px;height:1px;background:#a0a0a0"></div>
<div class="t" style="left:215px;top:395px;font-size:11px;color:#000;">Доп. отпускные</div>
<div class="t" style="left:406px;top:395px;font-size:11px;color:#000;width:61px;text-align:right">0</div>
<div class="t" style="left:470px;top:395px;font-size:11px;color:#000;width:74px;text-align:right">0</div>
<div class="t" style="left:547px;top:395px;font-size:11px;color:#000;width:61px;text-align:right">0</div>
<div class="a" style="left:202px;top:408px;width:11px;height:18px;background:#f0f0f0;border-left:1px solid #fff"></div>
<div class="a" style="left:202px;top:426px;width:410px;height:1px;background:#a0a0a0"></div>
<div class="t" style="left:215px;top:413px;font-size:11px;color:#000;">Больничные</div>
<div class="t" style="left:406px;top:413px;font-size:11px;color:#000;width:61px;text-align:right">0</div>
<div class="t" style="left:470px;top:413px;font-size:11px;color:#000;width:74px;text-align:right">0</div>
<div class="t" style="left:547px;top:413px;font-size:11px;color:#000;width:61px;text-align:right">0</div>
<div class="a" style="left:202px;top:426px;width:11px;height:18px;background:#f0f0f0;border-left:1px solid #fff"></div>
<div class="a" style="left:202px;top:444px;width:410px;height:1px;background:#a0a0a0"></div>
<div class="t" style="left:215px;top:431px;font-size:11px;color:#000;">Другие</div>
<div class="t" style="left:406px;top:431px;font-size:11px;color:#000;width:61px;text-align:right">0</div>
<div class="t" style="left:470px;top:431px;font-size:11px;color:#000;width:74px;text-align:right">0</div>
<div class="t" style="left:547px;top:431px;font-size:11px;color:#000;width:61px;text-align:right">0</div>
<div class="a" style="left:202px;top:444px;width:11px;height:18px;background:#f0f0f0;border-left:1px solid #fff"></div>
<div class="a" style="left:202px;top:462px;width:410px;height:1px;background:#a0a0a0"></div>
<div class="t" style="left:215px;top:449px;font-size:11px;color:#000;">Индексация</div>
<div class="t" style="left:406px;top:449px;font-size:11px;color:#000;width:61px;text-align:right">0</div>
<div class="t" style="left:470px;top:449px;font-size:11px;color:#000;width:74px;text-align:right">0</div>
<div class="t" style="left:547px;top:449px;font-size:11px;color:#000;width:61px;text-align:right">0</div>
<div class="a" style="left:202px;top:462px;width:11px;height:18px;background:#f0f0f0;border-left:1px solid #fff"></div>
<div class="a" style="left:202px;top:480px;width:410px;height:1px;background:#a0a0a0"></div>
<div class="t" style="left:215px;top:467px;font-size:11px;color:#000;">Вознаграждения</div>
<div class="t" style="left:406px;top:467px;font-size:11px;color:#000;width:61px;text-align:right">0</div>
<div class="t" style="left:470px;top:467px;font-size:11px;color:#000;width:74px;text-align:right">0</div>
<div class="t" style="left:547px;top:467px;font-size:11px;color:#000;width:61px;text-align:right">0</div>
<div class="a" style="left:202px;top:480px;width:11px;height:18px;background:#f0f0f0;border-left:1px solid #fff"></div>
<div class="a" style="left:202px;top:498px;width:410px;height:1px;background:#a0a0a0"></div>
<div class="t" style="left:215px;top:485px;font-size:11px;color:#000;">Необл. мат. помощь</div>
<div class="t" style="left:406px;top:485px;font-size:11px;color:#000;width:61px;text-align:right">0</div>
<div class="t" style="left:470px;top:485px;font-size:11px;color:#000;width:74px;text-align:right">0</div>
<div class="t" style="left:547px;top:485px;font-size:11px;color:#000;width:61px;text-align:right">0</div>
<div class="a" style="left:202px;top:498px;width:11px;height:18px;background:#f0f0f0;border-left:1px solid #fff"></div>
<div class="a" style="left:202px;top:516px;width:410px;height:1px;background:#a0a0a0"></div>
<div class="t" style="left:215px;top:503px;font-size:11px;color:#000;">Прим. 1</div>
<div class="t" style="left:406px;top:503px;font-size:11px;color:#000;width:61px;text-align:right">0</div>
<div class="t" style="left:470px;top:503px;font-size:11px;color:#000;width:74px;text-align:right">0</div>
<div class="t" style="left:547px;top:503px;font-size:11px;color:#000;width:61px;text-align:right">0</div>
<div class="a" style="left:202px;top:516px;width:11px;height:18px;background:#f0f0f0;border-left:1px solid #fff"></div>
<div class="a" style="left:202px;top:534px;width:410px;height:1px;background:#a0a0a0"></div>
<div class="t" style="left:215px;top:521px;font-size:11px;color:#000;">Прим. 2</div>
<div class="t" style="left:406px;top:521px;font-size:11px;color:#000;width:61px;text-align:right">0</div>
<div class="t" style="left:470px;top:521px;font-size:11px;color:#000;width:74px;text-align:right">0</div>
<div class="t" style="left:547px;top:521px;font-size:11px;color:#000;width:61px;text-align:right">0</div>
<div class="a" style="left:202px;top:534px;width:11px;height:18px;background:#f0f0f0;border-left:1px solid #fff"></div>
<div class="a" style="left:202px;top:552px;width:410px;height:1px;background:#a0a0a0"></div>
<div class="t" style="left:215px;top:539px;font-size:11px;color:#000;">Прим. 3</div>
<div class="t" style="left:406px;top:539px;font-size:11px;color:#000;width:61px;text-align:right">0</div>
<div class="t" style="left:470px;top:539px;font-size:11px;color:#000;width:74px;text-align:right">0</div>
<div class="t" style="left:547px;top:539px;font-size:11px;color:#000;width:61px;text-align:right">0</div>
<div class="a" style="left:202px;top:552px;width:11px;height:18px;background:#f0f0f0;border-left:1px solid #fff"></div>
<div class="a" style="left:202px;top:570px;width:410px;height:1px;background:#a0a0a0"></div>
<div class="t" style="left:215px;top:557px;font-size:11px;color:#000;">Прим. 4</div>
<div class="t" style="left:406px;top:557px;font-size:11px;color:#000;width:61px;text-align:right">0</div>
<div class="t" style="left:470px;top:557px;font-size:11px;color:#000;width:74px;text-align:right">0</div>
<div class="t" style="left:547px;top:557px;font-size:11px;color:#000;width:61px;text-align:right">0</div>
<div class="a" style="left:202px;top:570px;width:11px;height:18px;background:#f0f0f0;border-left:1px solid #fff"></div>
<div class="a" style="left:202px;top:588px;width:410px;height:1px;background:#a0a0a0"></div>
<div class="t" style="left:215px;top:575px;font-size:11px;color:#000;">Прим. 5</div>
<div class="t" style="left:406px;top:575px;font-size:11px;color:#000;width:61px;text-align:right">0</div>
<div class="t" style="left:470px;top:575px;font-size:11px;color:#000;width:74px;text-align:right">0</div>
<div class="t" style="left:547px;top:575px;font-size:11px;color:#000;width:61px;text-align:right">0</div>
<div class="a" style="left:213px;top:210px;width:1px;height:378px;background:#a0a0a0"></div>
<div class="a" style="left:406px;top:210px;width:1px;height:378px;background:#a0a0a0"></div>
<div class="a" style="left:470px;top:210px;width:1px;height:378px;background:#a0a0a0"></div>
<div class="a" style="left:547px;top:210px;width:1px;height:378px;background:#a0a0a0"></div>
<div class="a" style="left:611px;top:210px;width:1px;height:378px;background:#a0a0a0"></div>
<div class="a" style="left:202px;top:611px;width:444px;height:17px;background:#f0f0f0"></div>
<div class="a" style="left:202px;top:611px;width:17px;height:17px;background:#f3f3f3;border:1px solid #a9b0b8;border-radius:3px;box-shadow:inset 0 0 0 1px #fbfbfb"></div>
<svg class="a" style="left:204px;top:615px;" width="13" height="9" viewBox="0 0 13 9"><g fill="#8c8c8c"><rect x="0" y="0" width="2" height="9"/><path d="M7.5 0 L3 4.5 L7.5 9Z M12.5 0 L8 4.5 L12.5 9Z"/></g></svg>
<div class="a" style="left:219px;top:611px;width:17px;height:17px;background:#f3f3f3;border:1px solid #a9b0b8;border-radius:3px;box-shadow:inset 0 0 0 1px #fbfbfb"></div>
<svg class="a" style="left:221px;top:615px;" width="13" height="9" viewBox="0 0 13 9"><g fill="#8c8c8c"><path d="M6.5 0 L2 4.5 L6.5 9Z M11.5 0 L7 4.5 L11.5 9Z"/></g></svg>
<div class="a" style="left:236px;top:611px;width:17px;height:17px;background:#f3f3f3;border:1px solid #a9b0b8;border-radius:3px;box-shadow:inset 0 0 0 1px #fbfbfb"></div>
<svg class="a" style="left:238px;top:615px;" width="13" height="9" viewBox="0 0 13 9"><g fill="#8c8c8c"><path d="M8.5 0 L3.5 4.5 L8.5 9Z"/></g></svg>
<div class="a" style="left:253px;top:611px;width:17px;height:17px;background:linear-gradient(#f6f6f6 0,#ececec 50%,#dedede 100%);border:1px solid #707070;border-radius:3px;box-shadow:inset 0 0 0 1px #fafafa"></div>
<svg class="a" style="left:255px;top:615px;" width="13" height="9" viewBox="0 0 13 9"><g fill="#000"><path d="M4 0 L9 4.5 L4 9Z"/></g></svg>
<div class="a" style="left:270px;top:611px;width:17px;height:17px;background:linear-gradient(#f6f6f6 0,#ececec 50%,#dedede 100%);border:1px solid #707070;border-radius:3px;box-shadow:inset 0 0 0 1px #fafafa"></div>
<svg class="a" style="left:272px;top:615px;" width="13" height="9" viewBox="0 0 13 9"><g fill="#000"><path d="M1 0 L5.5 4.5 L1 9Z M6 0 L10.5 4.5 L6 9Z"/></g></svg>
<div class="a" style="left:287px;top:611px;width:17px;height:17px;background:linear-gradient(#f6f6f6 0,#ececec 50%,#dedede 100%);border:1px solid #707070;border-radius:3px;box-shadow:inset 0 0 0 1px #fafafa"></div>
<svg class="a" style="left:289px;top:615px;" width="13" height="9" viewBox="0 0 13 9"><g fill="#000"><path d="M0 0 L4.5 4.5 L0 9Z M5 0 L9.5 4.5 L5 9Z"/><rect x="9.5" y="0" width="2" height="9"/></g></svg>
<div class="a" style="left:304px;top:611px;width:17px;height:17px;background:linear-gradient(#f6f6f6 0,#ececec 50%,#dedede 100%);border:1px solid #707070;border-radius:3px;box-shadow:inset 0 0 0 1px #fafafa"></div>
<svg class="a" style="left:306px;top:614px;" width="13" height="11" viewBox="0 0 13 11"><path d="M2.2 9.5 q-1.6-2.8 0-5.4 q2.4-3.2 5.8-1.4 q1.4 0.8 2 2.2" fill="none" stroke="#1a2a9a" stroke-width="1.2"/><path d="M6.5 8.8 L11.5 8.8 L11.5 3.8Z" fill="#1a2a9a"/></svg>
<div class="a" style="left:321px;top:611px;width:17px;height:17px;background:linear-gradient(#f6f6f6 0,#ececec 50%,#dedede 100%);border:1px solid #707070;border-radius:3px;box-shadow:inset 0 0 0 1px #fafafa"></div>
<svg class="a" style="left:323px;top:614px;" width="13" height="11" viewBox="0 0 13 11"><path d="M6.5 1 v9 M2 5.5 h9 M3.3 2.3 L9.7 8.7 M9.7 2.3 L3.3 8.7" stroke="#000" stroke-width="1.1"/></svg>
<div class="a" style="left:338px;top:611px;width:17px;height:17px;background:#f3f3f3;border:1px solid #a9b0b8;border-radius:3px;box-shadow:inset 0 0 0 1px #fbfbfb"></div>
<svg class="a" style="left:340px;top:613px;" width="13" height="13" viewBox="0 0 13 13"><path d="M0 1 L4 4 L0 7Z" fill="#a8a8a8"/><path d="M8 5 v8 M4 9 h8 M5.2 6.2 L10.8 11.8 M10.8 6.2 L5.2 11.8" stroke="#a8a8a8" stroke-width="1.4"/></svg>
<div class="a" style="left:355px;top:611px;width:17px;height:17px;background:linear-gradient(#f6f6f6 0,#ececec 50%,#dedede 100%);border:1px solid #707070;border-radius:3px;box-shadow:inset 0 0 0 1px #fafafa"></div>
<svg class="a" style="left:357px;top:613px;" width="13" height="13" viewBox="0 0 13 13"><rect x="1" y="1.2" width="11" height="2.2" rx="1" fill="none" stroke="#000" stroke-width="1.1"/><path d="M1.6 3.4 L5 7.5 M11.4 3.4 L8 7.5" fill="none" stroke="#000" stroke-width="1.1"/><rect x="4.7" y="7.7" width="3.6" height="3.4" fill="none" stroke="#000" stroke-width="1.1"/></svg>
<div class="a" style="left:422px;top:611px;width:224px;height:17px;background:linear-gradient(#e8e8e8,#f0f0f0)"></div>
<svg class="a" style="left:428px;top:616px;" width="5" height="7" viewBox="0 0 5 7"><path d="M4 0 L0 3.5 L4 7Z" fill="#a4a4a4"/></svg>
<svg class="a" style="left:635px;top:616px;" width="5" height="7" viewBox="0 0 5 7"><path d="M0 0 L4 3.5 L0 7Z" fill="#a4a4a4"/></svg>
<div class="a" style="left:655px;top:158px;width:360px;height:471px;background:#fff;border:1px solid #7b8391;border-right:none"></div>
<div class="a" style="left:656px;top:159px;width:349px;height:33px;background:#a0a0a0"></div>
<div class="a" style="left:662px;top:167px;width:56px;height:17px;background:linear-gradient(#ffffff 0,#fbfbfb 60%,#f0f0f0 100%)"></div>
<div class="t" style="left:664px;top:171px;font-size:11px;color:#000;">Вид</div>
<svg class="a" style="left:689px;top:170px;" width="10" height="9" viewBox="0 0 10 9"><path d="M5 0.8 L9.2 8.2 H0.8Z" fill="none" stroke="#bcbcbc" stroke-width="0.9"/></svg>
<div class="a" style="left:701px;top:169px;width:15px;height:13px;background:linear-gradient(#eeeeee 0,#ebebeb 50%,#d8d8d8 50%,#d6d6d6 100%);border:1px solid #6d6d6d;box-shadow:inset 0 0 0 1px #fff"></div>
<svg class="a" style="left:704px;top:177px;" width="9" height="4" viewBox="0 0 9 4"><path d="M0 0 H9 L4.5 4Z" fill="#000"/></svg>
<div class="a" style="left:656px;top:192px;width:349px;height:16px;background:linear-gradient(#ffffff 0,#fdfdfd 70%,#ededed 100%)"></div>
<div class="a" style="left:659px;top:197px;width:1px;height:1px;background:#000"></div>
<div class="a" style="left:661px;top:197px;width:5px;height:1px;background:#000"></div>
<div class="a" style="left:659px;top:199px;width:1px;height:1px;background:#000"></div>
<div class="a" style="left:661px;top:199px;width:5px;height:1px;background:#000"></div>
<div class="a" style="left:659px;top:201px;width:1px;height:1px;background:#000"></div>
<div class="a" style="left:661px;top:201px;width:5px;height:1px;background:#000"></div>
<div class="a" style="left:659px;top:203px;width:1px;height:1px;background:#000"></div>
<div class="a" style="left:661px;top:203px;width:5px;height:1px;background:#000"></div>
<div class="a" style="left:659px;top:205px;width:1px;height:1px;background:#000"></div>
<div class="a" style="left:661px;top:205px;width:5px;height:1px;background:#000"></div>
<div class="t" style="left:670px;top:196px;font-size:11px;color:#000;">Название</div>
<div class="a" style="left:862px;top:194px;width:15px;height:13px;background:linear-gradient(#eeeeee 0,#ebebeb 50%,#d8d8d8 50%,#d6d6d6 100%);border:1px solid #6d6d6d;box-shadow:inset 0 0 0 1px #fff"></div>
<svg class="a" style="left:865px;top:202px;" width="9" height="4" viewBox="0 0 9 4"><path d="M0 0 H9 L4.5 4Z" fill="#000"/></svg>
<div class="t" style="left:880px;top:196px;font-size:11px;color:#000;">Вкл./Вык</div>
<div class="a" style="left:926px;top:194px;width:15px;height:13px;background:linear-gradient(#eeeeee 0,#ebebeb 50%,#d8d8d8 50%,#d6d6d6 100%);border:1px solid #6d6d6d;box-shadow:inset 0 0 0 1px #fff"></div>
<svg class="a" style="left:929px;top:202px;" width="9" height="4" viewBox="0 0 9 4"><path d="M0 0 H9 L4.5 4Z" fill="#000"/></svg>
<div class="t" style="left:944px;top:196px;font-size:11px;color:#000;">Начальны</div>
<div class="a" style="left:996px;top:194px;width:15px;height:13px;background:linear-gradient(#eeeeee 0,#ebebeb 50%,#d8d8d8 50%,#d6d6d6 100%);border:1px solid #6d6d6d;box-shadow:inset 0 0 0 1px #fff"></div>
<svg class="a" style="left:999px;top:202px;" width="9" height="4" viewBox="0 0 9 4"><path d="M0 0 H9 L4.5 4Z" fill="#000"/></svg>
<div class="a" style="left:656px;top:208px;width:11px;height:18px;background:#f0f0f0;border-left:1px solid #fff"></div>
<div class="a" style="left:668px;top:208px;width:337px;height:18px;background:#f0f0f0"></div>
<svg class="a" style="left:659px;top:213px;" width="6" height="10" viewBox="0 0 6 10"><path d="M0 0 L5.5 5 L0 10Z" fill="#000"/></svg>
<div class="t" style="left:669px;top:213px;font-size:11px;color:#000;">Вид : Начисления</div>
<div class="a" style="left:656px;top:226px;width:11px;height:1px;background:#a0a0a0"></div>
<div class="a" style="left:682px;top:226px;width:323px;height:1px;background:#a0a0a0"></div>
<div class="a" style="left:656px;top:227px;width:11px;height:18px;background:#f0f0f0;border-left:1px solid #fff"></div>
<div class="a" style="left:668px;top:226px;width:14px;height:19px;background:#f0f0f0"></div>
<div class="t" style="left:684px;top:231px;font-size:11px;color:#000;">Пенсионный</div>
<div class="a" style="left:904px;top:229px;width:13px;height:13px;background:linear-gradient(135deg,#c8d0dc,#f0f2f4);border:1px solid #8e8f8f;box-shadow:inset 0 0 0 1px #fafafa"></div>
<svg class="a" style="left:906px;top:231px;" width="9" height="9" viewBox="0 0 9 9"><path d="M1.5 4.5 L3.6 7.6 L7.8 1" fill="none" stroke="#4a62a8" stroke-width="1.7"/></svg>
<div class="t" style="left:944px;top:231px;font-size:11px;color:#000;letter-spacing:0.15px">01.01.1900</div>
<div class="a" style="left:656px;top:244px;width:11px;height:1px;background:#a0a0a0"></div>
<div class="a" style="left:682px;top:244px;width:323px;height:1px;background:#a0a0a0"></div>
<div class="a" style="left:656px;top:245px;width:11px;height:18px;background:#f0f0f0;border-left:1px solid #fff"></div>
<div class="a" style="left:668px;top:244px;width:14px;height:19px;background:#f0f0f0"></div>
<div class="t" style="left:684px;top:249px;font-size:11px;color:#000;">Пенсионный инвалиды</div>
<div class="a" style="left:904px;top:247px;width:13px;height:13px;background:linear-gradient(135deg,#c8d0dc,#f0f2f4);border:1px solid #8e8f8f;box-shadow:inset 0 0 0 1px #fafafa"></div>
<svg class="a" style="left:906px;top:249px;" width="9" height="9" viewBox="0 0 9 9"><path d="M1.5 4.5 L3.6 7.6 L7.8 1" fill="none" stroke="#4a62a8" stroke-width="1.7"/></svg>
<div class="t" style="left:944px;top:249px;font-size:11px;color:#000;letter-spacing:0.15px">01.01.1900</div>
<div class="a" style="left:656px;top:262px;width:11px;height:1px;background:#a0a0a0"></div>
<div class="a" style="left:682px;top:262px;width:323px;height:1px;background:#a0a0a0"></div>
<div class="a" style="left:656px;top:263px;width:11px;height:18px;background:#f0f0f0;border-left:1px solid #fff"></div>
<div class="a" style="left:668px;top:262px;width:14px;height:19px;background:#f0f0f0"></div>
<div class="t" style="left:684px;top:267px;font-size:11px;color:#000;">Соцстрах от ВПТ</div>
<div class="a" style="left:904px;top:265px;width:13px;height:13px;background:linear-gradient(135deg,#c8d0dc,#f0f2f4);border:1px solid #8e8f8f;box-shadow:inset 0 0 0 1px #fafafa"></div>
<svg class="a" style="left:906px;top:267px;" width="9" height="9" viewBox="0 0 9 9"><path d="M1.5 4.5 L3.6 7.6 L7.8 1" fill="none" stroke="#4a62a8" stroke-width="1.7"/></svg>
<div class="t" style="left:944px;top:267px;font-size:11px;color:#000;letter-spacing:0.15px">01.01.1900</div>
<div class="a" style="left:656px;top:280px;width:11px;height:1px;background:#a0a0a0"></div>
<div class="a" style="left:682px;top:280px;width:323px;height:1px;background:#a0a0a0"></div>
<div class="a" style="left:656px;top:281px;width:11px;height:18px;background:#f0f0f0;border-left:1px solid #fff"></div>
<div class="a" style="left:668px;top:280px;width:14px;height:19px;background:#f0f0f0"></div>
<div class="t" style="left:684px;top:285px;font-size:11px;color:#000;">Соцстрах от НС</div>
<div class="a" style="left:904px;top:283px;width:13px;height:13px;background:linear-gradient(135deg,#c8d0dc,#f0f2f4);border:1px solid #8e8f8f;box-shadow:inset 0 0 0 1px #fafafa"></div>
<svg class="a" style="left:906px;top:285px;" width="9" height="9" viewBox="0 0 9 9"><path d="M1.5 4.5 L3.6 7.6 L7.8 1" fill="none" stroke="#4a62a8" stroke-width="1.7"/></svg>
<div class="t" style="left:944px;top:285px;font-size:11px;color:#000;letter-spacing:0.15px">01.01.1900</div>
<div class="a" style="left:656px;top:298px;width:11px;height:1px;background:#a0a0a0"></div>
<div class="a" style="left:682px;top:298px;width:323px;height:1px;background:#a0a0a0"></div>
<div class="a" style="left:656px;top:299px;width:11px;height:18px;background:#f0f0f0;border-left:1px solid #fff"></div>
<div class="a" style="left:668px;top:298px;width:14px;height:19px;background:#f0f0f0"></div>
<div class="t" style="left:684px;top:303px;font-size:11px;color:#000;">Соцстрах Безработица</div>
<div class="a" style="left:904px;top:301px;width:13px;height:13px;background:linear-gradient(135deg,#c8d0dc,#f0f2f4);border:1px solid #8e8f8f;box-shadow:inset 0 0 0 1px #fafafa"></div>
<svg class="a" style="left:906px;top:303px;" width="9" height="9" viewBox="0 0 9 9"><path d="M1.5 4.5 L3.6 7.6 L7.8 1" fill="none" stroke="#4a62a8" stroke-width="1.7"/></svg>
<div class="t" style="left:944px;top:303px;font-size:11px;color:#000;letter-spacing:0.15px">01.01.1900</div>
<div class="a" style="left:656px;top:316px;width:11px;height:1px;background:#a0a0a0"></div>
<div class="a" style="left:682px;top:316px;width:323px;height:1px;background:#a0a0a0"></div>
<div class="a" style="left:656px;top:317px;width:11px;height:18px;background:#f0f0f0;border-left:1px solid #fff"></div>
<div class="a" style="left:668px;top:316px;width:14px;height:19px;background:#f0f0f0"></div>
<div class="t" style="left:684px;top:321px;font-size:11px;color:#000;">Коммунальный</div>
<div class="a" style="left:904px;top:319px;width:13px;height:13px;background:linear-gradient(135deg,#c8d0dc,#f0f2f4);border:1px solid #8e8f8f;box-shadow:inset 0 0 0 1px #fafafa"></div>
<svg class="a" style="left:906px;top:321px;" width="9" height="9" viewBox="0 0 9 9"><path d="M1.5 4.5 L3.6 7.6 L7.8 1" fill="none" stroke="#4a62a8" stroke-width="1.7"/></svg>
<div class="t" style="left:944px;top:321px;font-size:11px;color:#000;letter-spacing:0.15px">01.01.1900</div>
<div class="a" style="left:656px;top:334px;width:349px;height:1px;background:#a0a0a0"></div>
<div class="a" style="left:656px;top:335px;width:11px;height:18px;background:#f0f0f0;border-left:1px solid #fff"></div>
<div class="a" style="left:668px;top:335px;width:337px;height:18px;background:#f0f0f0"></div>
<div class="t" style="left:669px;top:339px;font-size:11px;color:#000;">Вид : Отчисления</div>
<div class="a" style="left:656px;top:352px;width:11px;height:1px;background:#a0a0a0"></div>
<div class="a" style="left:682px;top:352px;width:323px;height:1px;background:#a0a0a0"></div>
<div class="a" style="left:656px;top:353px;width:11px;height:18px;background:#f0f0f0;border-left:1px solid #fff"></div>
<div class="a" style="left:668px;top:352px;width:14px;height:19px;background:#f0f0f0"></div>
<div class="t" style="left:684px;top:357px;font-size:11px;color:#000;">Пенсионный 0.5%</div>
<div class="a" style="left:904px;top:355px;width:13px;height:13px;background:linear-gradient(135deg,#c8d0dc,#f0f2f4);border:1px solid #8e8f8f;box-shadow:inset 0 0 0 1px #fafafa"></div>
<svg class="a" style="left:906px;top:357px;" width="9" height="9" viewBox="0 0 9 9"><path d="M1.5 4.5 L3.6 7.6 L7.8 1" fill="none" stroke="#4a62a8" stroke-width="1.7"/></svg>
<div class="t" style="left:944px;top:357px;font-size:11px;color:#000;letter-spacing:0.15px">01.01.1900</div>
<div class="a" style="left:656px;top:370px;width:11px;height:1px;background:#a0a0a0"></div>
<div class="a" style="left:682px;top:370px;width:323px;height:1px;background:#a0a0a0"></div>
<div class="a" style="left:656px;top:371px;width:11px;height:18px;background:#f0f0f0;border-left:1px solid #fff"></div>
<div class="a" style="left:668px;top:370px;width:14px;height:19px;background:#f0f0f0"></div>
<div class="t" style="left:684px;top:375px;font-size:11px;color:#000;">Пенсионный 2%</div>
<div class="a" style="left:904px;top:373px;width:13px;height:13px;background:linear-gradient(135deg,#c8d0dc,#f0f2f4);border:1px solid #8e8f8f;box-shadow:inset 0 0 0 1px #fafafa"></div>
<svg class="a" style="left:906px;top:375px;" width="9" height="9" viewBox="0 0 9 9"><path d="M1.5 4.5 L3.6 7.6 L7.8 1" fill="none" stroke="#4a62a8" stroke-width="1.7"/></svg>
<div class="t" style="left:944px;top:375px;font-size:11px;color:#000;letter-spacing:0.15px">01.01.1900</div>
<div class="a" style="left:656px;top:388px;width:11px;height:1px;background:#a0a0a0"></div>
<div class="a" style="left:682px;top:388px;width:323px;height:1px;background:#a0a0a0"></div>
<div class="a" style="left:656px;top:389px;width:11px;height:18px;background:#f0f0f0;border-left:1px solid #fff"></div>
<div class="a" style="left:668px;top:388px;width:14px;height:19px;background:#f0f0f0"></div>
<div class="t" style="left:684px;top:393px;font-size:11px;color:#000;">Соцстрах от ВПТ (0,5%)</div>
<div class="a" style="left:904px;top:391px;width:13px;height:13px;background:linear-gradient(135deg,#c8d0dc,#f0f2f4);border:1px solid #8e8f8f;box-shadow:inset 0 0 0 1px #fafafa"></div>
<svg class="a" style="left:906px;top:393px;" width="9" height="9" viewBox="0 0 9 9"><path d="M1.5 4.5 L3.6 7.6 L7.8 1" fill="none" stroke="#4a62a8" stroke-width="1.7"/></svg>
<div class="t" style="left:944px;top:393px;font-size:11px;color:#000;letter-spacing:0.15px">01.01.1900</div>
<div class="a" style="left:656px;top:406px;width:11px;height:1px;background:#a0a0a0"></div>
<div class="a" style="left:682px;top:406px;width:323px;height:1px;background:#a0a0a0"></div>
<div class="a" style="left:656px;top:407px;width:11px;height:18px;background:#f0f0f0;border-left:1px solid #fff"></div>
<div class="a" style="left:668px;top:406px;width:14px;height:19px;background:#f0f0f0"></div>
<div class="t" style="left:684px;top:411px;font-size:11px;color:#000;">Соцстрах от ВПТ (1%)</div>
<div class="a" style="left:904px;top:409px;width:13px;height:13px;background:linear-gradient(135deg,#c8d0dc,#f0f2f4);border:1px solid #8e8f8f;box-shadow:inset 0 0 0 1px #fafafa"></div>
<svg class="a" style="left:906px;top:411px;" width="9" height="9" viewBox="0 0 9 9"><path d="M1.5 4.5 L3.6 7.6 L7.8 1" fill="none" stroke="#4a62a8" stroke-width="1.7"/></svg>
<div class="t" style="left:944px;top:411px;font-size:11px;color:#000;letter-spacing:0.15px">01.01.1900</div>
<div class="a" style="left:656px;top:424px;width:11px;height:1px;background:#a0a0a0"></div>
<div class="a" style="left:682px;top:424px;width:323px;height:1px;background:#a0a0a0"></div>
<div class="a" style="left:656px;top:425px;width:11px;height:18px;background:#f0f0f0;border-left:1px solid #fff"></div>
<div class="a" style="left:668px;top:424px;width:14px;height:19px;background:#f0f0f0"></div>
<div class="t" style="left:684px;top:429px;font-size:11px;color:#000;">Соцстрах Безработица</div>
<div class="a" style="left:904px;top:427px;width:13px;height:13px;background:linear-gradient(135deg,#c8d0dc,#f0f2f4);border:1px solid #8e8f8f;box-shadow:inset 0 0 0 1px #fafafa"></div>
<svg class="a" style="left:906px;top:429px;" width="9" height="9" viewBox="0 0 9 9"><path d="M1.5 4.5 L3.6 7.6 L7.8 1" fill="none" stroke="#4a62a8" stroke-width="1.7"/></svg>
<div class="t" style="left:944px;top:429px;font-size:11px;color:#000;letter-spacing:0.15px">01.01.1900</div>
<div class="a" style="left:656px;top:442px;width:11px;height:1px;background:#a0a0a0"></div>
<div class="a" style="left:682px;top:442px;width:323px;height:1px;background:#a0a0a0"></div>
<div class="a" style="left:656px;top:443px;width:11px;height:18px;background:#f0f0f0;border-left:1px solid #fff"></div>
<div class="a" style="left:668px;top:442px;width:14px;height:19px;background:#f0f0f0"></div>
<div class="t" style="left:684px;top:447px;font-size:11px;color:#000;">НДФЛ</div>
<div class="a" style="left:904px;top:445px;width:13px;height:13px;background:linear-gradient(135deg,#c8d0dc,#f0f2f4);border:1px solid #8e8f8f;box-shadow:inset 0 0 0 1px #fafafa"></div>
<svg class="a" style="left:906px;top:447px;" width="9" height="9" viewBox="0 0 9 9"><path d="M1.5 4.5 L3.6 7.6 L7.8 1" fill="none" stroke="#4a62a8" stroke-width="1.7"/></svg>
<div class="t" style="left:944px;top:447px;font-size:11px;color:#000;letter-spacing:0.15px">01.01.1900</div>
<div class="a" style="left:656px;top:460px;width:11px;height:1px;background:#a0a0a0"></div>
<div class="a" style="left:682px;top:460px;width:323px;height:1px;background:#a0a0a0"></div>
<div class="a" style="left:656px;top:461px;width:11px;height:18px;background:#f0f0f0;border-left:1px solid #fff"></div>
<div class="a" style="left:668px;top:460px;width:14px;height:19px;background:#f0f0f0"></div>
<div class="t" style="left:684px;top:465px;font-size:11px;color:#000;">НДФЛ (без льгот)</div>
<div class="a" style="left:904px;top:463px;width:13px;height:13px;background:linear-gradient(135deg,#c8d0dc,#f0f2f4);border:1px solid #8e8f8f;box-shadow:inset 0 0 0 1px #fafafa"></div>
<svg class="a" style="left:906px;top:465px;" width="9" height="9" viewBox="0 0 9 9"><path d="M1.5 4.5 L3.6 7.6 L7.8 1" fill="none" stroke="#4a62a8" stroke-width="1.7"/></svg>
<div class="t" style="left:944px;top:465px;font-size:11px;color:#000;letter-spacing:0.15px">01.01.1900</div>
<div class="a" style="left:656px;top:478px;width:11px;height:1px;background:#a0a0a0"></div>
<div class="a" style="left:682px;top:478px;width:323px;height:1px;background:#a0a0a0"></div>
<div class="a" style="left:656px;top:479px;width:11px;height:18px;background:#f0f0f0;border-left:1px solid #fff"></div>
<div class="a" style="left:668px;top:478px;width:14px;height:19px;background:#f0f0f0"></div>
<div class="t" style="left:684px;top:483px;font-size:11px;color:#000;">Соцстрах Безработица (пенсионер)</div>
<div class="a" style="left:904px;top:481px;width:13px;height:13px;background:linear-gradient(135deg,#c8d0dc,#f0f2f4);border:1px solid #8e8f8f;box-shadow:inset 0 0 0 1px #fafafa"></div>
<svg class="a" style="left:906px;top:483px;" width="9" height="9" viewBox="0 0 9 9"><path d="M1.5 4.5 L3.6 7.6 L7.8 1" fill="none" stroke="#4a62a8" stroke-width="1.7"/></svg>
<div class="t" style="left:944px;top:483px;font-size:11px;color:#000;letter-spacing:0.15px">01.01.1900</div>
<div class="a" style="left:656px;top:496px;width:349px;height:1px;background:#a0a0a0"></div>
<div class="a" style="left:667px;top:208px;width:1px;height:288px;background:#a0a0a0"></div>
<div class="a" style="left:682px;top:226px;width:1px;height:108px;background:#a0a0a0"></div>
<div class="a" style="left:878px;top:226px;width:1px;height:108px;background:#a0a0a0"></div>
<div class="a" style="left:942px;top:226px;width:1px;height:108px;background:#a0a0a0"></div>
<div class="a" style="left:682px;top:352px;width:1px;height:144px;background:#a0a0a0"></div>
<div class="a" style="left:878px;top:352px;width:1px;height:144px;background:#a0a0a0"></div>
<div class="a" style="left:942px;top:352px;width:1px;height:144px;background:#a0a0a0"></div>
<div class="a" style="left:656px;top:611px;width:349px;height:17px;background:#f0f0f0"></div>
<div class="a" style="left:656px;top:611px;width:17px;height:17px;background:#f3f3f3;border:1px solid #a9b0b8;border-radius:3px;box-shadow:inset 0 0 0 1px #fbfbfb"></div>
<svg class="a" style="left:658px;top:615px;" width="13" height="9" viewBox="0 0 13 9"><g fill="#8c8c8c"><rect x="0" y="0" width="2" height="9"/><path d="M7.5 0 L3 4.5 L7.5 9Z M12.5 0 L8 4.5 L12.5 9Z"/></g></svg>
<div class="a" style="left:673px;top:611px;width:17px;height:17px;background:#f3f3f3;border:1px solid #a9b0b8;border-radius:3px;box-shadow:inset 0 0 0 1px #fbfbfb"></div>
<svg class="a" style="left:675px;top:615px;" width="13" height="9" viewBox="0 0 13 9"><g fill="#8c8c8c"><path d="M6.5 0 L2 4.5 L6.5 9Z M11.5 0 L7 4.5 L11.5 9Z"/></g></svg>
<div class="a" style="left:690px;top:611px;width:17px;height:17px;background:#f3f3f3;border:1px solid #a9b0b8;border-radius:3px;box-shadow:inset 0 0 0 1px #fbfbfb"></div>
<svg class="a" style="left:692px;top:615px;" width="13" height="9" viewBox="0 0 13 9"><g fill="#8c8c8c"><path d="M8.5 0 L3.5 4.5 L8.5 9Z"/></g></svg>
<div class="a" style="left:707px;top:611px;width:17px;height:17px;background:linear-gradient(#f6f6f6 0,#ececec 50%,#dedede 100%);border:1px solid #707070;border-radius:3px;box-shadow:inset 0 0 0 1px #fafafa"></div>
<svg class="a" style="left:709px;top:615px;" width="13" height="9" viewBox="0 0 13 9"><g fill="#000"><path d="M4 0 L9 4.5 L4 9Z"/></g></svg>
<div class="a" style="left:724px;top:611px;width:17px;height:17px;background:linear-gradient(#f6f6f6 0,#ececec 50%,#dedede 100%);border:1px solid #707070;border-radius:3px;box-shadow:inset 0 0 0 1px #fafafa"></div>
<svg class="a" style="left:726px;top:615px;" width="13" height="9" viewBox="0 0 13 9"><g fill="#000"><path d="M1 0 L5.5 4.5 L1 9Z M6 0 L10.5 4.5 L6 9Z"/></g></svg>
<div class="a" style="left:741px;top:611px;width:17px;height:17px;background:linear-gradient(#f6f6f6 0,#ececec 50%,#dedede 100%);border:1px solid #707070;border-radius:3px;box-shadow:inset 0 0 0 1px #fafafa"></div>
<svg class="a" style="left:743px;top:615px;" width="13" height="9" viewBox="0 0 13 9"><g fill="#000"><path d="M0 0 L4.5 4.5 L0 9Z M5 0 L9.5 4.5 L5 9Z"/><rect x="9.5" y="0" width="2" height="9"/></g></svg>
<div class="a" style="left:758px;top:611px;width:17px;height:17px;background:linear-gradient(#f6f6f6 0,#ececec 50%,#dedede 100%);border:1px solid #707070;border-radius:3px;box-shadow:inset 0 0 0 1px #fafafa"></div>
<svg class="a" style="left:760px;top:614px;" width="13" height="11" viewBox="0 0 13 11"><path d="M2.2 9.5 q-1.6-2.8 0-5.4 q2.4-3.2 5.8-1.4 q1.4 0.8 2 2.2" fill="none" stroke="#1a2a9a" stroke-width="1.2"/><path d="M6.5 8.8 L11.5 8.8 L11.5 3.8Z" fill="#1a2a9a"/></svg>
<div class="a" style="left:775px;top:611px;width:17px;height:17px;background:linear-gradient(#f6f6f6 0,#ececec 50%,#dedede 100%);border:1px solid #707070;border-radius:3px;box-shadow:inset 0 0 0 1px #fafafa"></div>
<svg class="a" style="left:777px;top:614px;" width="13" height="11" viewBox="0 0 13 11"><path d="M6.5 1 v9 M2 5.5 h9 M3.3 2.3 L9.7 8.7 M9.7 2.3 L3.3 8.7" stroke="#000" stroke-width="1.1"/></svg>
<div class="a" style="left:792px;top:611px;width:17px;height:17px;background:#f3f3f3;border:1px solid #a9b0b8;border-radius:3px;box-shadow:inset 0 0 0 1px #fbfbfb"></div>
<svg class="a" style="left:794px;top:613px;" width="13" height="13" viewBox="0 0 13 13"><path d="M0 1 L4 4 L0 7Z" fill="#a8a8a8"/><path d="M8 5 v8 M4 9 h8 M5.2 6.2 L10.8 11.8 M10.8 6.2 L5.2 11.8" stroke="#a8a8a8" stroke-width="1.4"/></svg>
<div class="a" style="left:809px;top:611px;width:17px;height:17px;background:linear-gradient(#f6f6f6 0,#ececec 50%,#dedede 100%);border:1px solid #707070;border-radius:3px;box-shadow:inset 0 0 0 1px #fafafa"></div>
<svg class="a" style="left:811px;top:613px;" width="13" height="13" viewBox="0 0 13 13"><rect x="1" y="1.2" width="11" height="2.2" rx="1" fill="none" stroke="#000" stroke-width="1.1"/><path d="M1.6 3.4 L5 7.5 M11.4 3.4 L8 7.5" fill="none" stroke="#000" stroke-width="1.1"/><rect x="4.7" y="7.7" width="3.6" height="3.4" fill="none" stroke="#000" stroke-width="1.1"/></svg>
<div class="a" style="left:876px;top:611px;width:128px;height:17px;background:linear-gradient(#e8e8e8,#f0f0f0)"></div>
<svg class="a" style="left:882px;top:616px;" width="5" height="7" viewBox="0 0 5 7"><path d="M4 0 L0 3.5 L4 7Z" fill="#404040"/></svg>
<svg class="a" style="left:993px;top:616px;" width="5" height="7" viewBox="0 0 5 7"><path d="M0 0 L4 3.5 L0 7Z" fill="#404040"/></svg>
<div class="a" style="left:894px;top:612px;width:90px;height:15px;background:linear-gradient(#f2f2f2 0,#e6e6e6 50%,#d6d6d6 50%,#d0d0d0 100%);border:1px solid #8b8b8b;border-radius:2px;box-shadow:inset 0 0 0 1px #fcfcfc"></div>
<div class="a" style="left:935px;top:616px;width:2px;height:7px;background:#707070;border-right:1px solid #fff"></div>
<div class="a" style="left:938px;top:616px;width:2px;height:7px;background:#707070;border-right:1px solid #fff"></div>
<div class="a" style="left:941px;top:616px;width:2px;height:7px;background:#707070;border-right:1px solid #fff"></div>
<div class="a" style="left:329px;top:152px;width:145px;height:53px;background:#fff;border:1px solid #000"></div>
<div class="a" style="left:330px;top:170px;width:127px;height:17px;background:#3399ff;outline:1px dotted #e07000;outline-offset:-1px"></div>
<div class="t" style="left:332px;top:157px;font-size:11px;color:#000;">Загальна</div>
<div class="t" style="left:332px;top:174px;font-size:11px;color:#fff;">Єдиний податок</div>
<div class="t" style="left:332px;top:191px;font-size:11px;color:#000;">Фіксований с/г податок</div>
<div class="a" style="left:457px;top:153px;width:16px;height:51px;background:linear-gradient(90deg,#e6e6e6,#f2f2f2 40%,#f2f2f2 60%,#e6e6e6)"></div>
<svg class="a" style="left:461px;top:159px;" width="8" height="5" viewBox="0 0 8 5"><path d="M0 4.5 L4 0 L8 4.5Z" fill="#555"/></svg>
<svg class="a" style="left:461px;top:193px;" width="8" height="5" viewBox="0 0 8 5"><path d="M0 0 L4 4.5 L8 0Z" fill="#555"/></svg>
<div class="a" style="left:458px;top:173px;width:13px;height:11px;background:linear-gradient(90deg,#f6f6f6,#e4e4e4);border:1px solid #9a9a9a;border-radius:2px"></div>
<div class="a" style="left:461px;top:176px;width:7px;height:1px;background:#555"></div>
<div class="a" style="left:461px;top:178px;width:7px;height:1px;background:#555"></div>
<div class="a" style="left:461px;top:180px;width:7px;height:1px;background:#555"></div>
<svg class="a" style="left:446px;top:177px;" width="13" height="20" viewBox="0 0 13 20"><path d="M0.5 0.5 V15.5 L4 12 L6.5 18 L9 17 L6.5 11 H11.5Z" fill="#fff" stroke="#000" stroke-width="1" stroke-linejoin="round"/></svg>
<div class="a" style="left:1004px;top:158px;width:1px;height:471px;background:#7b8391"></div>
<div class="a" style="left:1005px;top:28px;width:6px;height:651px;background:#b9d1ea"></div>
<div class="a" style="left:1011px;top:8px;width:1px;height:672px;background:#3fd4f4"></div>
<div class="a" style="left:1012px;top:8px;width:1px;height:673px;background:#000"></div>
<div class="a" style="left:8px;top:629px;width:997px;height:24px;background:linear-gradient(#ffffff 0,#e8ebf6 9px,#d3d9ed 9px,#dde2f1 100%)"></div>
<div class="a" style="left:8px;top:653px;width:997px;height:1px;background:#8e9096"></div>
<div class="a" style="left:12px;top:633px;width:2px;height:2px;background:linear-gradient(135deg,#e8eaf0 0,#e8eaf0 40%,#7e828e 40%);box-shadow:-1px -1px 0 rgba(255,255,255,0.7)"></div>
<div class="a" style="left:12px;top:637px;width:2px;height:2px;background:linear-gradient(135deg,#e8eaf0 0,#e8eaf0 40%,#7e828e 40%);box-shadow:-1px -1px 0 rgba(255,255,255,0.7)"></div>
<div class="a" style="left:12px;top:641px;width:2px;height:2px;background:linear-gradient(135deg,#e8eaf0 0,#e8eaf0 40%,#7e828e 40%);box-shadow:-1px -1px 0 rgba(255,255,255,0.7)"></div>
<div class="a" style="left:12px;top:645px;width:2px;height:2px;background:linear-gradient(135deg,#e8eaf0 0,#e8eaf0 40%,#7e828e 40%);box-shadow:-1px -1px 0 rgba(255,255,255,0.7)"></div>
<div class="a" style="left:17px;top:632px;width:143px;height:18px;background:linear-gradient(#e6e9f4,#d4d9ec);border:1px solid #505664;border-radius:4px"></div>
<div class="a" style="left:22px;top:633px;width:1px;height:16px;background:#fff"></div>
<svg class="a" style="left:24px;top:633px;" width="13" height="16" viewBox="0 0 13 16"><path d="M0.5 0.5 H8 L12.5 5 V15.5 H0.5Z" fill="#fbfbfb" stroke="#a8acb8"/><path d="M8 0.5 V5 H12.5" fill="#e8e8ec" stroke="#a8acb8"/></svg>
<div class="t" style="left:42px;top:636px;font-size:12px;color:#000;">Список: Виды оплат</div>
<div class="a" style="left:8px;top:654px;width:997px;height:18px;background:#efebea"></div>
<div class="a" style="left:8px;top:672px;width:997px;height:1px;background:#fdfdfd"></div>
<div class="a" style="left:994px;top:669px;width:2px;height:2px;background:linear-gradient(135deg,#e0e0e0 0,#e0e0e0 40%,#7a7a7a 40%);box-shadow:-1px -1px 0 #fff"></div>
<div class="a" style="left:997px;top:669px;width:2px;height:2px;background:linear-gradient(135deg,#e0e0e0 0,#e0e0e0 40%,#7a7a7a 40%);box-shadow:-1px -1px 0 #fff"></div>
<div class="a" style="left:1000px;top:669px;width:2px;height:2px;background:linear-gradient(135deg,#e0e0e0 0,#e0e0e0 40%,#7a7a7a 40%);box-shadow:-1px -1px 0 #fff"></div>
<div class="a" style="left:997px;top:666px;width:2px;height:2px;background:linear-gradient(135deg,#e0e0e0 0,#e0e0e0 40%,#7a7a7a 40%);box-shadow:-1px -1px 0 #fff"></div>
<div class="a" style="left:1000px;top:666px;width:2px;height:2px;background:linear-gradient(135deg,#e0e0e0 0,#e0e0e0 40%,#7a7a7a 40%);box-shadow:-1px -1px 0 #fff"></div>
<div class="a" style="left:1000px;top:663px;width:2px;height:2px;background:linear-gradient(135deg,#e0e0e0 0,#e0e0e0 40%,#7a7a7a 40%);box-shadow:-1px -1px 0 #fff"></div>
</body></html>
